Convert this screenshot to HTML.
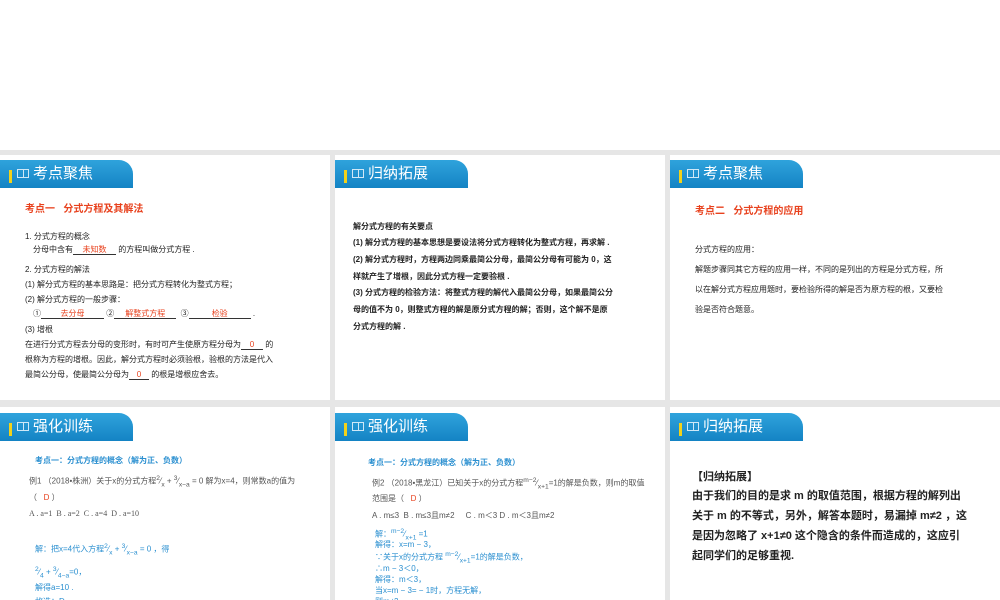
<!DOCTYPE html><html><head><meta charset="utf-8"><style>
*{margin:0;padding:0;box-sizing:border-box}
body{width:1000px;height:600px;background:#fff;position:relative;overflow:hidden;font-family:"Liberation Sans","Noto Sans CJK SC",sans-serif;color:#222}
.g{position:absolute;left:0;top:150px;width:1000px;height:450px;background:#e6e6e6}
.p{position:absolute;background:#fff;overflow:hidden}
.tab{position:absolute;left:0;width:133px;height:28px;background:linear-gradient(#2fa3dc,#1483c4);border-top-right-radius:14px;color:#fff;font-size:15px;line-height:28px;padding-left:33px}
.tab:before{content:"";position:absolute;left:9px;top:10px;width:3px;height:13px;background:#f2d21a}
.tab i{position:absolute;left:17px;top:9px;width:12px;height:9px;border:1px solid #cfe8f7;font-style:normal}
.tab i:after{content:"";position:absolute;left:5px;top:0;width:1px;height:7px;background:#cfe8f7}
.t{position:absolute;font-size:8px;white-space:nowrap;line-height:1}
.r{color:#e8411d}.b{color:#2a8fd0}
.u{display:inline-block;border-bottom:1px solid #333;text-align:center;color:#e8411d}
.bd{font-weight:bold}
</style></head><body>
<div class="g"></div>
<!-- row1 -->
<div class="p" style="left:0;top:155px;width:330px;height:245px">
<div class="tab" style="top:5px"><i></i>考点聚焦</div>
<div class="t r bd" style="left:25px;top:50px;font-size:10px">考点一&nbsp;&nbsp;&nbsp;分式方程及其解法</div>
<div class="t" style="left:25px;top:78px">1. 分式方程的概念</div>
<div class="t" style="left:33px;top:91px">分母中含有<span class="u" style="width:43px">未知数</span> 的方程叫做分式方程 .</div>
<div class="t" style="left:25px;top:111px">2. 分式方程的解法</div>
<div class="t" style="left:25px;top:126px">(1) 解分式方程的基本思路是：把分式方程转化为整式方程；</div>
<div class="t" style="left:25px;top:141px">(2) 解分式方程的一般步骤：</div>
<div class="t" style="left:33px;top:155px">①<span class="u" style="width:63px">去分母</span> ②<span class="u" style="width:62px">解整式方程</span>&nbsp;&nbsp;③<span class="u" style="width:62px">检验</span> .</div>
<div class="t" style="left:25px;top:171px">(3) 增根</div>
<div class="t" style="left:25px;top:186px">在进行分式方程去分母的变形时，有时可产生使原方程分母为<span class="u" style="width:22px">0</span> 的</div>
<div class="t" style="left:25px;top:201px">根称为方程的增根。因此，解分式方程时必须验根，验根的方法是代入</div>
<div class="t" style="left:25px;top:216px">最简公分母，使最简公分母为<span class="u" style="width:20px">0</span> 的根是增根应舍去。</div>
</div>
<div class="p" style="left:335px;top:155px;width:330px;height:245px">
<div class="tab" style="top:5px"><i></i>归纳拓展</div>
<div class="t bd" style="left:18px;top:68px">解分式方程的有关要点</div>
<div class="t bd" style="left:18px;top:84px">(1) 解分式方程的基本思想是要设法将分式方程转化为整式方程，再求解 .</div>
<div class="t bd" style="left:18px;top:101px">(2) 解分式方程时，方程两边同乘最简公分母，最简公分母有可能为 0，这</div>
<div class="t bd" style="left:18px;top:118px">样就产生了增根，因此分式方程一定要验根 .</div>
<div class="t bd" style="left:18px;top:134px">(3) 分式方程的检验方法：将整式方程的解代入最简公分母，如果最简公分</div>
<div class="t bd" style="left:18px;top:151px">母的值不为 0，则整式方程的解是原分式方程的解；否则，这个解不是原</div>
<div class="t bd" style="left:18px;top:168px">分式方程的解 .</div>
</div>
<div class="p" style="left:670px;top:155px;width:330px;height:245px">
<div class="tab" style="top:5px"><i></i>考点聚焦</div>
<div class="t r bd" style="left:25px;top:52px;font-size:10px">考点二&nbsp;&nbsp;&nbsp;分式方程的应用</div>
<div class="t" style="left:25px;top:91px">分式方程的应用：</div>
<div class="t" style="left:25px;top:111px">解题步骤同其它方程的应用一样，不同的是列出的方程是分式方程，所</div>
<div class="t" style="left:25px;top:131px">以在解分式方程应用题时，要检验所得的解是否为原方程的根，又要检</div>
<div class="t" style="left:25px;top:151px">验是否符合题意。</div>
</div>
<!-- row2 -->
<div class="p" style="left:0;top:407px;width:330px;height:193px">
<div class="tab" style="top:6px"><i></i>强化训练</div>
<div class="t b bd" style="left:35px;top:50px">考点一：分式方程的概念（解为正、负数）</div>
<div class="t" style="left:29px;top:69px;color:#555">例1 （2018•株洲）关于x的分式方程<sup>2</sup>⁄<sub>x</sub> + <sup>3</sup>⁄<sub>x−a</sub> = 0 解为x=4，则常数a的值为</div>
<div class="t" style="left:29px;top:87px;color:#555">（&nbsp;&nbsp;&nbsp;<span class="r">D</span> ）</div>
<div class="t" style="left:29px;top:103px;color:#555;font-family:'Liberation Serif',serif">A . a=1&nbsp;&nbsp;B . a=2&nbsp;&nbsp;C . a=4&nbsp;&nbsp;D . a=10</div>
<div class="t b" style="left:35px;top:137px">解：把x=4代入方程<sup>2</sup>⁄<sub>x</sub> + <sup>3</sup>⁄<sub>x−a</sub> = 0 ，得</div>
<div class="t b" style="left:35px;top:160px"><sup>2</sup>⁄<sub>4</sub> + <sup>3</sup>⁄<sub>4−a</sub>=0，</div>
<div class="t b" style="left:35px;top:177px">解得a=10 .</div>
<div class="t b" style="left:35px;top:191px">故选：D</div>
</div>
<div class="p" style="left:335px;top:407px;width:330px;height:193px">
<div class="tab" style="top:6px"><i></i>强化训练</div>
<div class="t b bd" style="left:33px;top:52px">考点一：分式方程的概念（解为正、负数）</div>
<div class="t" style="left:37px;top:71px;color:#555">例2 （2018•黑龙江）已知关于x的分式方程<sup>m−2</sup>⁄<sub>x+1</sub>=1的解是负数，则m的取值</div>
<div class="t" style="left:37px;top:88px;color:#555">范围是（&nbsp;&nbsp;&nbsp;<span class="r">D</span> ）</div>
<div class="t" style="left:37px;top:105px;color:#555">A . m≤3&nbsp;&nbsp;B . m≤3且m≠2&nbsp;&nbsp;&nbsp;&nbsp;&nbsp;C . m＜3 D . m＜3且m≠2</div>
<div class="t b" style="left:40px;top:122px">解：<sup>m−2</sup>⁄<sub>x+1</sub> =1</div>
<div class="t b" style="left:40px;top:134px">解得：x=m − 3，</div>
<div class="t b" style="left:40px;top:145px">∵关于x的分式方程 <sup>m−2</sup>⁄<sub>x+1</sub>=1的解是负数，</div>
<div class="t b" style="left:40px;top:158px">∴m − 3＜0，</div>
<div class="t b" style="left:40px;top:169px">解得：m＜3，</div>
<div class="t b" style="left:40px;top:180px">当x=m − 3= − 1时，方程无解，</div>
<div class="t b" style="left:40px;top:191px">则m≠2，</div>
</div>
<div class="p" style="left:670px;top:407px;width:330px;height:193px">
<div class="tab" style="top:6px"><i></i>归纳拓展</div>
<div class="t bd" style="left:22px;top:65px;font-size:11px">【归纳拓展】</div>
<div class="t bd" style="left:22px;top:84px;font-size:11px">由于我们的目的是求 m 的取值范围，根据方程的解列出</div>
<div class="t bd" style="left:22px;top:104px;font-size:11px">关于 m 的不等式，另外，解答本题时，易漏掉 m≠2 ，这</div>
<div class="t bd" style="left:22px;top:124px;font-size:11px">是因为忽略了 x+1≠0 这个隐含的条件而造成的，这应引</div>
<div class="t bd" style="left:22px;top:144px;font-size:11px">起同学们的足够重视.</div>
</div>
</body></html>
